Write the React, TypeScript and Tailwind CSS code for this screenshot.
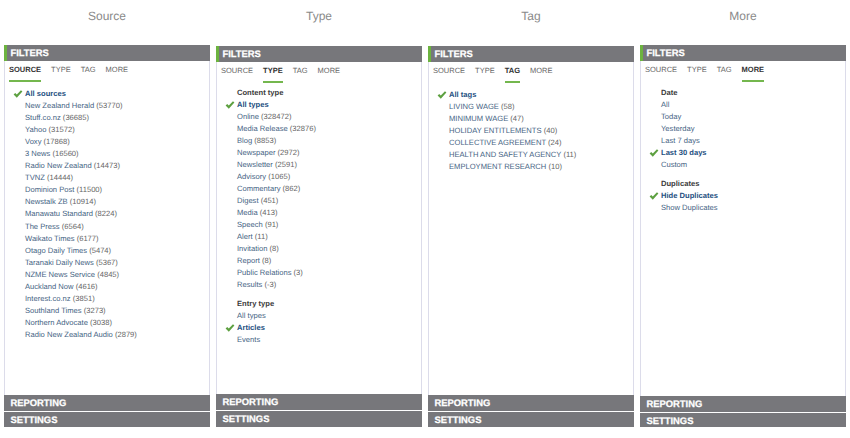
const tabs = ['SOURCE', 'TYPE', 'TAG', 'MORE'];

type Item = { label: string; count?: string; checked?: boolean; heading?: boolean; gap?: boolean };

// "New Zealand Herald (53770)" -> name and count get their own colour
const toItems = (labels: string[]): Item[] =>
  labels.map((text) => {
    const at = text.lastIndexOf(' (');
    return at < 0 ? { label: text } : { label: text.slice(0, at), count: text.slice(at) };
  });

const sourceItems: Item[] = [
  { label: 'All sources', checked: true },
  ...toItems([
    'New Zealand Herald (53770)',
    'Stuff.co.nz (36685)',
    'Yahoo (31572)',
    'Voxy (17868)',
    '3 News (16560)',
    'Radio New Zealand (14473)',
    'TVNZ (14444)',
    'Dominion Post (11500)',
    'Newstalk ZB (10914)',
    'Manawatu Standard (8224)',
    'The Press (6564)',
    'Waikato Times (6177)',
    'Otago Daily Times (5474)',
    'Taranaki Daily News (5367)',
    'NZME News Service (4845)',
    'Auckland Now (4616)',
    'Interest.co.nz (3851)',
    'Southland Times (3273)',
    'Northern Advocate (3038)',
    'Radio New Zealand Audio (2879)',
  ]),
];

const typeItems: Item[] = [
  { label: 'Content type', heading: true },
  { label: 'All types', checked: true },
  ...toItems([
    'Online (328472)',
    'Media Release (32876)',
    'Blog (8853)',
    'Newspaper (2972)',
    'Newsletter (2591)',
    'Advisory (1065)',
    'Commentary (862)',
    'Digest (451)',
    'Media (413)',
    'Speech (91)',
    'Alert (11)',
    'Invitation (8)',
    'Report (8)',
    'Public Relations (3)',
    'Results (-3)',
  ]),
  { label: 'Entry type', heading: true, gap: true },
  { label: 'All types' },
  { label: 'Articles', checked: true },
  { label: 'Events' },
];

const tagItems: Item[] = [
  { label: 'All tags', checked: true },
  ...toItems([
    'LIVING WAGE (58)',
    'MINIMUM WAGE (47)',
    'HOLIDAY ENTITLEMENTS (40)',
    'COLLECTIVE AGREEMENT (24)',
    'HEALTH AND SAFETY AGENCY (11)',
    'EMPLOYMENT RESEARCH (10)',
  ]),
];

const moreItems: Item[] = [
  { label: 'Date', heading: true },
  ...toItems(['All', 'Today', 'Yesterday', 'Last 7 days']),
  { label: 'Last 30 days', checked: true },
  { label: 'Custom' },
  { label: 'Duplicates', heading: true, gap: true },
  { label: 'Hide Duplicates', checked: true },
  { label: 'Show Duplicates' },
];

// the four shots in the picture don't line up exactly, so each has its own offsets
const panels = [
  { title: 'Source', active: 'SOURCE', items: sourceItems, head: 'h-[45px]', body: 'h-[334px]', list: 'pt-[6px]' },
  { title: 'Type', active: 'TYPE', items: typeItems, head: 'h-[46px]', body: 'h-[332px]', list: 'pt-[3.5px]' },
  { title: 'Tag', active: 'TAG', items: tagItems, head: 'h-[46px]', body: 'h-[333px]', list: 'pt-[6px]' },
  { title: 'More', active: 'MORE', items: moreItems, head: 'h-[45px]', body: 'h-[335px]', list: 'pt-[5px]' },
];

const Check = () => (
  <svg className="absolute left-[-12px] top-[2px]" width="10" height="8" viewBox="0 0 11 10">
    <path d="M0 5.6 L2 3.6 L4 5.6 L9.2 0.3 L11 2 L4 9.6 Z" fill="#5da040" />
  </svg>
);

const Row = ({ item }: { item: Item }) => {
  let tone = 'text-[#466484]';
  if (item.heading) tone = 'font-bold text-[#3c3c3c]';
  else if (item.checked) tone = 'font-bold text-[#24507f]';

  return (
    <li className={`relative h-[12.05px] leading-3 whitespace-nowrap ${tone} ${item.gap ? 'mt-[7px]' : ''}`}>
      {item.checked && <Check />}
      {item.label}
      {item.count && <span className="text-[#666666]">{item.count}</span>}
    </li>
  );
};

const Bar = ({ label, accent }: { label: string; accent?: boolean }) => (
  <div
    className={`flex h-4 shrink-0 items-center bg-[#77777b] text-[9.4px] font-bold text-white [-webkit-text-stroke:0.25px_#ffffff] ${
      accent ? 'border-l-[3px] border-[#6cb33f] pl-[3.5px]' : 'pl-[6.5px]'
    }`}
  >
    {label}
  </div>
);

export default function App() {
  return (
    <div className="flex h-[438px] w-[850px] items-start gap-[6px] overflow-hidden bg-white pl-1 pr-[6px] font-['Liberation_Sans',Arial,sans-serif] [text-rendering:geometricPrecision]">
      {panels.map((panel) => (
        <div key={panel.title} className="flex h-[426.5px] w-[206px] shrink-0 flex-col overflow-hidden">
          <h2 className={`flex shrink-0 justify-center pt-[8px] text-[12px] leading-4 font-normal text-[#8a8a8a] ${panel.head}`}>
            {panel.title}
          </h2>
          <Bar label="FILTERS" accent />
          <div className={`flex shrink-0 flex-col border-x border-[#dcdcea] text-[7.6px] ${panel.body}`}>
            <div className="flex h-[21px] shrink-0 gap-[10px] pl-[4px] pt-[2px] text-[7.5px] text-[#666666]">
              {tabs.map((tab) => (
                <span
                  key={tab}
                  className={`h-[19px] leading-[13px] ${
                    tab === panel.active ? 'border-b-2 border-[#74b74e] font-bold text-[#333333]' : ''
                  }`}
                >
                  {tab}
                </span>
              ))}
            </div>
            <ul className={`flex flex-col pl-[20px] ${panel.list}`}>
              {panel.items.map((item) => (
                <Row key={item.label + (item.heading ? 'h' : '')} item={item} />
              ))}
            </ul>
          </div>
          <div className="flex flex-col gap-px">
            <Bar label="REPORTING" />
            <Bar label="SETTINGS" />
          </div>
        </div>
      ))}
    </div>
  );
}
